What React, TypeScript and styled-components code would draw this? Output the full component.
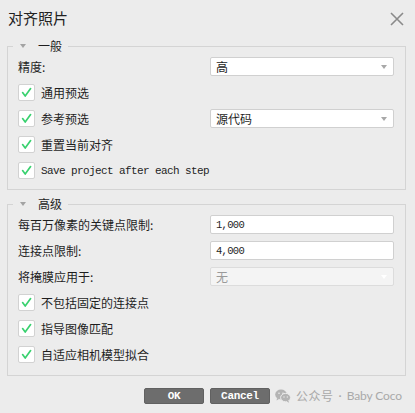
import React from 'react'
import styled, { createGlobalStyle } from 'styled-components'

const GlobalStyle = createGlobalStyle`
  html, body {
    margin: 0;
    padding: 0;
    background: #ececec;
  }
  body {
    font-family: "Noto Sans CJK SC", "Noto Sans", sans-serif;
    color: #1e1e1e;
  }
`

const Dialog = styled.div`
  width: 415px;
  height: 413px;
  background: #ececec;
  overflow: hidden;
`

const TitleBar = styled.div`
  height: 36px;
  display: flex;
  align-items: center;
  justify-content: space-between;
  padding: 0 11px 0 8px;
  box-sizing: border-box;
`

const Title = styled.div`
  font-size: 15px;
  line-height: 18px;
  margin-top: -1px;
  color: #222;
`

const CloseBtn = styled.div`
  width: 14px;
  height: 14px;
  display: flex;
  margin-top: 1px;
`

const Group = styled.fieldset<{ $top: number; $bottom: number }>`
  margin: ${p => p.$top}px 9px 0 7px;
  padding: 4px 11px ${p => p.$bottom}px 10px;
  border: 1px solid #d4d4d4;
  min-width: 0;
  display: flex;
  flex-direction: column;
  gap: 7px;
`

const Legend = styled.legend`
  margin-left: -5px;
  padding: 0 6px 0 7px;
  height: 14px;
  line-height: 14px;
  font-size: 12px;
  display: flex;
  align-items: center;
  gap: 12px;
`

const LegendArrow = styled.span`
  width: 0;
  height: 0;
  border-left: 3px solid transparent;
  border-right: 3px solid transparent;
  border-top: 4px solid #a3a3a3;
`

const Row = styled.div`
  display: grid;
  grid-template-columns: 1fr 184px;
  align-items: center;
  height: 19px;
`

const Label = styled.span`
  font-size: 12px;
  line-height: 19px;
  white-space: nowrap;
`

const CheckLine = styled.label`
  display: flex;
  align-items: center;
  gap: 6px;
  height: 19px;
`

const Box = styled.span`
  width: 17px;
  height: 17px;
  box-sizing: border-box;
  background: #fff;
  border: 1px solid #d2d2d2;
  border-radius: 2px;
  display: flex;
  align-items: center;
  justify-content: center;
`

const MonoText = styled.span`
  font-family: "Liberation Mono", "DejaVu Sans Mono", monospace;
  font-size: 11px;
  letter-spacing: -0.6px;
  white-space: nowrap;
`

const Combo = styled.div<{ $disabled?: boolean }>`
  height: 19px;
  box-sizing: border-box;
  border: 1px solid ${p => (p.$disabled ? '#dcdcdc' : '#d0d0d0')};
  border-radius: 2px;
  background: ${p => (p.$disabled ? '#f4f4f4' : '#fff')};
  color: ${p => (p.$disabled ? '#9a9a9a' : '#1e1e1e')};
  display: flex;
  align-items: center;
  justify-content: space-between;
  padding: 0 6px 0 5px;
  font-size: 12px;
`

const ComboArrow = styled.span<{ $disabled?: boolean }>`
  width: 0;
  height: 0;
  border-left: 3.5px solid transparent;
  border-right: 3.5px solid transparent;
  border-top: 4px solid ${p => (p.$disabled ? '#ffffff' : '#a8a8a8')};
`

const NumInput = styled.div`
  height: 19px;
  box-sizing: border-box;
  border: 1px solid #d0d0d0;
  border-radius: 2px;
  background: #fff;
  display: flex;
  align-items: center;
  padding: 0 5px;
  font-family: "Liberation Mono", "DejaVu Sans Mono", monospace;
  font-size: 10.5px;
  letter-spacing: -0.7px;
`

const Footer = styled.div`
  display: flex;
  align-items: center;
  margin-top: 11px;
  padding-left: 144px;
  gap: 6px;
`

const Btn = styled.div`
  width: 60px;
  height: 16px;
  box-sizing: border-box;
  background: #6d6d6d;
  border: 1px solid #616161;
  border-radius: 2px;
  color: #fff;
  font-family: "Liberation Mono", "DejaVu Sans Mono", monospace;
  font-size: 11px;
  font-weight: bold;
  display: flex;
  align-items: center;
  justify-content: center;
  letter-spacing: -0.3px;
`

const Watermark = styled.div`
  display: flex;
  align-items: center;
  color: #a9a9a9;
  font-size: 12px;
  white-space: nowrap;
  margin-left: -1px;
`

const WmText = styled.span`
  margin-left: 5px;
  letter-spacing: 0.5px;
`

const Dot = styled.span`
  font-family: "Lato", "Open Sans", sans-serif;
  margin: 0 5px 0 5px;
`

const Latin = styled.span`
  font-family: "Lato", "Open Sans", sans-serif;
  font-size: 12px;
  letter-spacing: -0.1px;
`

const Check = () => (
  <Box>
    <svg width="11" height="11" viewBox="0 0 11 11">
      <path d="M1.6 5.6 L4.2 9 L9.6 1.6" fill="none" stroke="#39d16f" strokeWidth="1.7" strokeLinecap="round" strokeLinejoin="round" />
    </svg>
  </Box>
)

const CheckItem: React.FC<{ children: React.ReactNode }> = ({ children }) => (
  <CheckLine>
    <Check />
    {children}
  </CheckLine>
)

const WeChat = () => (
  <svg width="16" height="14" viewBox="0 0 16 14">
    <ellipse cx="6" cy="5.5" rx="5.8" ry="4.9" fill="#b4b4b4" />
    <path d="M2 9 L1.6 11.4 L4.4 9.8 Z" fill="#b4b4b4" />
    <ellipse cx="10.6" cy="8.6" rx="5" ry="4.2" fill="#b4b4b4" stroke="#ececec" strokeWidth="1" />
    <path d="M13.4 11.8 L14.2 13.8 L11.6 12.6 Z" fill="#b4b4b4" />
    <circle cx="4" cy="4.2" r="0.8" fill="#ececec" />
    <circle cx="8" cy="4.2" r="0.8" fill="#ececec" />
    <circle cx="9" cy="8" r="0.65" fill="#ececec" />
    <circle cx="12.3" cy="8" r="0.65" fill="#ececec" />
  </svg>
)

export default function App() {
  return (
    <Dialog>
      <GlobalStyle />
      <TitleBar>
        <Title>对齐照片</Title>
        <CloseBtn>
          <svg width="14" height="14" viewBox="0 0 14 14">
            <path d="M1 1 L13 13 M13 1 L1 13" stroke="#8a8a8a" strokeWidth="1.6" />
          </svg>
        </CloseBtn>
      </TitleBar>

      <Group $top={3} $bottom={9}>
        <Legend>
          <LegendArrow />
          一般
        </Legend>
        <Row>
          <Label>精度:</Label>
          <Combo>
            高
            <ComboArrow />
          </Combo>
        </Row>
        <CheckItem>
          <Label>通用预选</Label>
        </CheckItem>
        <Row>
          <CheckItem>
            <Label>参考预选</Label>
          </CheckItem>
          <Combo>
            源代码
            <ComboArrow />
          </Combo>
        </Row>
        <CheckItem>
          <Label>重置当前对齐</Label>
        </CheckItem>
        <CheckItem>
          <MonoText>Save project after each step</MonoText>
        </CheckItem>
      </Group>

      <Group $top={7} $bottom={11}>
        <Legend>
          <LegendArrow />
          高级
        </Legend>
        <Row>
          <Label>每百万像素的关键点限制:</Label>
          <NumInput>1,000</NumInput>
        </Row>
        <Row>
          <Label>连接点限制:</Label>
          <NumInput>4,000</NumInput>
        </Row>
        <Row>
          <Label>将掩膜应用于:</Label>
          <Combo $disabled>
            无
            <ComboArrow $disabled />
          </Combo>
        </Row>
        <CheckItem>
          <Label>不包括固定的连接点</Label>
        </CheckItem>
        <CheckItem>
          <Label>指导图像匹配</Label>
        </CheckItem>
        <CheckItem>
          <Label>自适应相机模型拟合</Label>
        </CheckItem>
      </Group>

      <Footer>
        <Btn>OK</Btn>
        <Btn>Cancel</Btn>
        <Watermark>
          <WeChat />
          <WmText>公众号</WmText>
          <Dot>·</Dot>
          <Latin>Baby Coco</Latin>
        </Watermark>
      </Footer>
    </Dialog>
  )
}
